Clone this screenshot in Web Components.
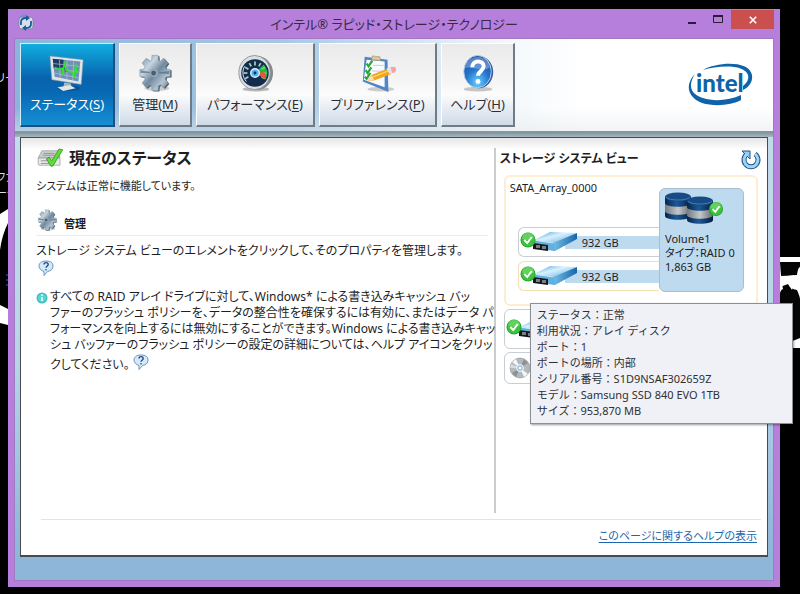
<!DOCTYPE html>
<html lang="ja">
<head>
<meta charset="utf-8">
<title>インテル® ラピッド・ストレージ・テクノロジー</title>
<style>
html{background:#000}
body{margin:0;min-height:100vh;box-sizing:border-box;padding:9px 20px 7px 8px;display:flex;position:relative;overflow:hidden;
font:12px/16px "Noto Sans","Noto Sans CJK JP",sans-serif;font-feature-settings:"palt";color:#1e1e1e}
app-window{flex:1}
</style>
</head>
<body>
<desk-top></desk-top>
<app-window>
  <title-bar slot="title">インテル® ラピッド・ストレージ・テクノロジー</title-bar>
  <tool-bar slot="tools">
    <nav-button icon="monitor" key="S" active>ステータス</nav-button>
    <nav-button icon="gear" key="M">管理</nav-button>
    <nav-button icon="gauge" key="E">パフォーマンス</nav-button>
    <nav-button icon="prefs" key="P">プリファレンス</nav-button>
    <nav-button icon="help" key="H">ヘルプ</nav-button>
  </tool-bar>
  <status-panel></status-panel>
  <storage-view slot="side"></storage-view>
  <a-help slot="foot">このページに関するヘルプの表示</a-help>
</app-window>
<script>
const define=(name,html,init)=>customElements.define(name,class extends HTMLElement{
  constructor(){
    super();
    const t=document.createElement('template');
    t.innerHTML=html;
    this.attachShadow({mode:'open'}).append(t.content.cloneNode(true));
  }
  connectedCallback(){ if(init) init(this,this.shadowRoot); }
});

const gearPath=(()=>{
  const n=8,p=[];
  for(let i=0;i<n;i++){
    const a=i*2*Math.PI/n;
    for(const [d,r] of [[-.3,14],[-.2,19],[.2,19],[.3,14]])
      p.push((20+r*.86*Math.cos(a+d)).toFixed(1)+' '+(20+r*Math.sin(a+d)).toFixed(1));
  }
  return 'M'+p.join('L')+'Z';
})();
const ticks=[...Array(9)].map((_,i)=>`<path d="M20 8v4" stroke="${i>5?'#5fe05a':'#9fd0cc'}" stroke-width="1.8" transform="rotate(${-120+i*30} 20 20)"/>`).join('');
const badge=(x,y,r)=>`<g transform="translate(${x} ${y}) scale(${r/10})"><circle r="10" fill="#1f9c2a"/><circle r="9" fill="#3cc23f"/><path d="M-8-2A8 8 0 0 1 8-2Q0 2-8-2" fill="#79dd70" opacity=".6"/><path d="M-5 0l4 4 6-8" fill="none" stroke="#fff" stroke-width="2.6"/></g>`;
const drum=x=>`<g transform="translate(${x})"><path d="M0 5v19c0 5 26 5 26 0V5z" fill="url(#nv)"/><path d="M0 11v8c0 5 26 5 26 0v-8c0 5-26 5-26 0" fill="url(#sv)"/><ellipse cx="13" cy="5" rx="13" ry="4.5" fill="#164b86"/><path d="M1 5c2 4 22 4 24 0" fill="none" stroke="#5c8fc0" stroke-width=".7"/></g>`;
const icons={
monitor:['0 0 40 40',`<ellipse cx="22" cy="36" rx="12" ry="3" fill="#023a70" opacity=".4"/><path d="M17 30l7 1 1 5h-9z" fill="#aab6bd"/><path d="M10 35l13-2 6 3-13 3z" fill="#e1e6e9"/><path d="M2 2l35 4-2 26L4 27z" fill="#dfe6e9" stroke="#81929c" stroke-width=".6"/><path d="M5 5l29 3-2 21L7 24z" fill="#6f91b5"/><path d="M5 5l11 1 5 13-15-4z" fill="#203969"/><path d="M5 10l28 3M6 15l27 4M6 20l26 5M12 6l1 19M20 7v20M27 8l-1 20" stroke="#b3c6da" stroke-width=".7"/><path d="M7 14l5 2 3-1 1 8 1-15 2 9 6 2 3 5 1-14 1 9 3-1" fill="none" stroke="#2ee52a" stroke-width="1.500"/>`],
gear:['0 0 40 40',`<defs><linearGradient id="g" x1="0" y1="0" x2="1" y2="1"><stop offset="0" stop-color="#73899a"/><stop offset=".3" stop-color="#c6d5df"/><stop offset=".52" stop-color="#7089a0"/><stop offset=".75" stop-color="#b3c5d2"/><stop offset="1" stop-color="#56697a"/></linearGradient></defs><ellipse cx="22" cy="36" rx="13" ry="3" fill="#888" opacity=".4"/><path d="${gearPath}" transform="translate(1.5 1)" fill="#526574"/><path d="${gearPath}" fill="url(#g)" stroke="#7b909f" stroke-width=".5"/><path d="M20 20L5 17v3zM20 20l15-2v3z" fill="#526777" opacity=".65"/><circle cx="19" cy="20" r="4.5" fill="#92a6b6"/><circle cx="18.500" cy="20" r="2.500" fill="#4b5d6b"/>`],
gauge:['0 0 40 40',`<ellipse cx="21" cy="37" rx="14" ry="2.500" fill="#777" opacity=".5"/><ellipse cx="22" cy="20" rx="17" ry="18" fill="#808a90"/><ellipse cx="19.500" cy="19.500" rx="16.500" ry="18" fill="#d9dfe2" stroke="#8d979c"/><circle cx="20" cy="20" r="14.500" fill="#152b4b"/><path d="M20 20l9-9a13 13 0 0 1 3 14z" fill="#27b34c"/>${ticks}<path d="M9 13c-3 5-2 12 2 16" stroke="#e5edf2" fill="none"/><path d="M20 20l12 7-2-8z" fill="#e8553c"/><circle cx="20" cy="20" r="4.500" fill="#4fb4ef" stroke="#d5efff" stroke-width="1.500"/><circle cx="20" cy="20" r="1.500" fill="#0c315b"/>`],
prefs:['0 0 40 40',`<ellipse cx="23" cy="37" rx="14" ry="2.500" fill="#777" opacity=".35"/><path d="M6 3l24 3 1 34-27-11z" fill="#4e86c6"/><path d="M8 6l19 2v27L5 27z" fill="#f8fbfd"/><path d="M14 2l8 1 1 4-10-1z" fill="#dfc7a4" stroke="#988461" stroke-width=".6"/><path d="M15 12h11M14 18h11M13 24h9" stroke="#c4ced8"/><path d="M8 10l2 3 4-6M7 17l2 3 4-6M6 24l2 2 4-6" fill="none" stroke="#2ca634" stroke-width="2.300"/><path d="M9 28l4-6 18-7 3 6-18 7z" fill="#f3a51e"/><path d="M10 27l5-3 18-7" stroke="#ffd467" fill="none" stroke-width="1.500"/><path d="M9 28l4-6 3 5z" fill="#f4dfbb"/><path d="M29 15l4-1 2 6-3 1z" fill="#e3e5e8"/><path d="M33 14q6-2 6 2t-4 4z" fill="#f4a5a1"/>`],
help:['0 0 40 40',`<defs><radialGradient id="h" cx=".5" cy=".85" r=".85"><stop offset="0" stop-color="#67d1ff"/><stop offset=".5" stop-color="#2675cd"/><stop offset="1" stop-color="#164ca5"/></radialGradient></defs><ellipse cx="20" cy="37" rx="15" ry="2.500" fill="#777" opacity=".4"/><ellipse cx="21" cy="19" rx="15" ry="17" fill="#325da1"/><ellipse cx="19.500" cy="18.500" rx="14.500" ry="17" fill="url(#h)" stroke="#b9d3ef"/><path d="M6 15C8-1 32-1 33 14 25 20 12 12 6 15" fill="#fff" opacity=".28"/><path d="M14 14c0-8 12-8 12-1 0 5-6 5-6 10" fill="none" stroke="#fff" stroke-width="4.200"/><circle cx="20" cy="29" r="2.600" fill="#fff"/>`],
app:['0 0 16 16',`<rect x="1" y="2" width="14" height="12" rx="3" fill="#d7e0e8" stroke="#6f7f91" stroke-width=".7"/><path d="M3 10V7q0-4 5-4M13 6v3q0 4-5 4" fill="none" stroke="#1b5d9b" stroke-width="1.800"/><path d="M8 0l4 3-4 3zM8 16l-4-3 4-3z" fill="#1b5d9b"/><path d="M1 3q3-4 7-3" fill="none" stroke="#4f9dd0"/>`],
ok:['0 0 28 22',`<path d="M5 3h18l2 8H1z" fill="#cbcdcf" stroke="#8e9194" stroke-width=".7"/><path d="M1 11h24v8H2q-1 0-1-2z" fill="#e5e6e7" stroke="#8e9194" stroke-width=".7"/><path d="M4 14h11M4 17h9M7 6h12M6 8h13" stroke="#909497"/><path d="M10 12l3-2 3 4 8-13 4 1-11 18h-2z" fill="#62d93c" stroke="#2b9b19" stroke-width=".9"/>`],
ask:['0 0 16 18',`<path d="M8 2C3 2 1 4.500 1 7s2 4.500 5 5.500v4l3.500-4C13 12 15 10 15 7s-2-5-7-5z" fill="#d2eafa" stroke="#6b93c0"/><path d="M6 5.500c0-2.500 4.200-2.500 4.200 0 0 1.700-2.200 1.700-2.200 3.300" fill="none" stroke="#21457f" stroke-width="1.300"/><circle cx="8" cy="10.700" r=".8" fill="#21457f"/>`],
info:['0 0 12 12',`<circle cx="6" cy="6" r="5.500" fill="#38bfc0"/><circle cx="6" cy="6" r="4.200" fill="#5bd3cf"/><path d="M6 5v4" stroke="#fff" stroke-width="1.600"/><circle cx="6" cy="3.200" r=".9" fill="#fff"/>`],
refresh:['0 0 20 20',`<path d="M6 5a7 7 0 1 0 8 0" fill="none" stroke="#255580" stroke-width="5"/><path d="M1 2h8v8z" fill="#8ed0f5" stroke="#255580" stroke-linejoin="round"/><path d="M6 5a7 7 0 1 0 8 0" fill="none" stroke="#9bd6f7" stroke-width="3"/>`],
drive:['0 0 56 20',`<defs><linearGradient id="d" x1="0" y1="0" x2="1" y2="1"><stop offset="0" stop-color="#3f9ad6"/><stop offset=".4" stop-color="#d9f1ff"/><stop offset="1" stop-color="#4ba0d8"/></linearGradient><linearGradient id="e"><stop offset="0" stop-color="#7cc6ee"/><stop offset="1" stop-color="#1766a8"/></linearGradient></defs><path d="M13 8L29 0l27 1-23 11z" fill="url(#d)"/><path d="M32 11L56 1v6L34 19l-4-1z" fill="url(#e)"/><path d="M12 8l21 3 1 8-22-3z" fill="#63b0de"/><path d="M12 11l15 2v6l-15-2z" fill="#15191d"/><path d="M16 13v3M18 13v3M22 14v3M24 14v3" stroke="#dce5ea"/><path d="M12 8l20 3" stroke="#c7e9f8"/>${badge(7,8,7.5)}`],
volume:['0 0 60 34',`<defs><linearGradient id="nv"><stop offset="0" stop-color="#082549"/><stop offset=".45" stop-color="#1c5a9b"/><stop offset="1" stop-color="#061d3d"/></linearGradient><linearGradient id="sv"><stop offset="0" stop-color="#747a7f"/><stop offset=".5" stop-color="#c5c8c9"/><stop offset="1" stop-color="#63696d"/></linearGradient></defs>${drum(0)}<g transform="translate(0 4)">${drum(22)}</g>${badge(51,17,7)}`],
disc:['0 0 22 22',`<circle cx="11" cy="11" r="10" fill="#b4b8bb" stroke="#8c9296" stroke-width=".6"/><path d="M11 11L3 5l4-3zM11 11l8 6-4 3z" fill="#f3f5f6"/><path d="M11 11l4-9 4 4zM11 11l-4 9-4-4z" fill="#8b9196"/><path d="M11 11H1l1-4z" fill="#d6dadd"/><circle cx="11" cy="11" r="3.500" fill="#a2c7dc" stroke="#f3f7f9"/><circle cx="11" cy="11" r="1.300" fill="#fff"/>`],
intel:['0 0 68 48',`<path d="M16 9C30 1 62-1 65 14c1 7-3 12-9 15v-4c4-3 6-7 5-11C58 3 31 4 16 9z" fill="#0f64a9"/><path d="M8 13C-2 23 0 36 15 42c13 4 30 2 39-3v-5C43 39 28 41 16 37 3 33 1 24 8 13z" fill="#0f64a9"/><text x="9" y="31" font-family="Lato,sans-serif" font-weight="900" font-size="24" fill="#0f64a9">intel</text>`]
};
define('ui-icon','<style>:host{display:inline-block;flex:none}span,svg{display:block;width:100%;height:100%;overflow:visible}</style><span></span>',(h,r)=>{
  const [vb,body]=icons[h.getAttribute('name')];
  r.querySelector('span').innerHTML=`<svg viewBox="${vb}" aria-hidden="true">${body}</svg>`;
});

define('desk-top',`<style>:host{position:absolute;inset:0;overflow:hidden;color:#ddd}
svg{position:absolute;top:0;height:594px}.l{left:0;width:8px}.r{right:0;width:21px}
span{position:absolute;left:-4px;white-space:nowrap;line-height:12px;font-size:11px}.a{top:72px}.b{top:171px}.c{top:187px}</style>
<svg class="l" viewBox="0 0 8 594"><path d="M0 214l8-5v14q-6 12-8 27zM0 305l8 4v16l-8-2z" fill="#fff"/><path d="M6 275h2M6 280h2M6 285h2" stroke="#3b61c5"/></svg>
<svg class="r" viewBox="0 0 21 594"><path d="M0 257h21v91H0z" fill="#fff"/><path d="M1 262h20v5q-2 0-3 8-7-1-9 8 2 6 9 7 3 7 3 9H1q-1-9 3-10-2-9-3-27z" fill="#050505"/><path d="M1 276q7 0 14-1 1 8-2 15l-4-6-8 3z" fill="#fff"/><path d="M0 299h21v39Q10 343 0 344z" fill="#050505"/></svg>
<span class="a">リー</span><span class="b">ファ</span><span class="c">ータ</span>`);

define('app-window',`<style>
:host{display:flex;flex-direction:column;position:relative;background:#b67fdb;padding:0 6px 6px}
.client{flex:1;display:flex;flex-direction:column;border:1px solid #a078c4;background:linear-gradient(#c6dfec,#b6d3e8 60%,#8eb6d8 95%)}
.under{height:5px;background:linear-gradient(#7f9099,#a5b9c1)}
.panel{flex:1;margin:0 5px 23px;border:1px solid #464c51;border-bottom-width:2px;background:linear-gradient(#e6e6e6,#fff 12px);
display:grid;grid-template-columns:minmax(0,7fr) minmax(0,4fr);grid-template-rows:1fr auto;box-sizing:border-box}
.main{margin:10px 0 6px;border-right:2px solid #ccc;padding:0 6px 0 15px}
.side{padding:11px 6px 0 4px}
footer{grid-column:1/-1;margin:0 6px 0 20px;border-top:1px solid #e3e3e3;padding:8px 4px 11px;text-align:right}
</style><slot name="title"></slot><div class="client"><slot name="tools"></slot><div class="under"></div>
<div class="panel"><main class="main"><slot></slot></main><aside class="side"><slot name="side"></slot></aside><footer><slot name="foot"></slot></footer></div></div>`);

define('title-bar',`<style>
:host{display:grid;grid-template-columns:100px 1fr 100px;height:29px;color:#3a2848}
.app{width:16px;height:16px;margin:6px 0 0 4px}
h1{margin:0;font:inherit;font-size:13px;line-height:30px;text-align:center;white-space:nowrap}
.ctl{display:flex;justify-content:flex-end;align-items:flex-start}
button{flex:none;border:0;background:none;padding:0;width:26px;height:20px;display:grid;place-items:center;color:#2b1b38}
.close{width:43px;background:#c9504f;color:#fff;height:19px;margin-top:1px}
svg{width:10px;height:10px}.close svg{width:8px;height:8px}
</style><ui-icon class="app" name="app"></ui-icon><h1><slot></slot></h1>
<div class="ctl"><button aria-label="最小化"><svg viewBox="0 0 10 10"><path d="M1 9h8" stroke="currentColor" stroke-width="2"/></svg></button>
<button aria-label="最大化"><svg viewBox="0 0 10 10"><path d="M.5 1.500h9v7h-9z" fill="none" stroke="currentColor"/><path d="M0 2h10" stroke="currentColor" stroke-width="2"/></svg></button>
<button class="close" aria-label="閉じる"><svg viewBox="0 0 10 10"><path d="M1 1l8 8M9 1L1 9" stroke="currentColor" stroke-width="2"/></svg></button></div>`);

define('tool-bar',`<style>
:host{display:flex;justify-content:space-between;align-items:center;padding:4px 18px 4px 5px;border-bottom:1px solid #8597a2;
background:linear-gradient(#fff0 75%,#e4e8ea80),linear-gradient(90deg,#8cb4da,#a5c7e5 35%,#f4f8fc 65%,#fff 75%)}
nav{display:grid;grid-template-columns:95px 73px 119px 118px 74px;gap:4px}
ui-icon{width:68px;height:48px}
</style><nav><slot></slot></nav><ui-icon name="intel"></ui-icon>`);

define('nav-button',`<style>
:host{display:block}
button{width:100%;height:84px;display:flex;flex-direction:column;align-items:center;padding:10px 0 0;gap:2px;
font:inherit;font-feature-settings:inherit;font-size:13px;line-height:20px;color:#2c3036;white-space:nowrap;
background:linear-gradient(#eaeaea,#f6f6f6 50%,#fcfcfc 62%,#cfdae7);border:1px solid #fff;border-right:2px solid #6f7b85;border-bottom:2px solid #6f7b85}
:host([active]) button{color:#fff;background:linear-gradient(#10aee0,#0863ae 42%,#0868b4 60%,#168fd3);border-color:#d4ecfa #1c4f7c #1c4f7c #d4ecfa}
ui-icon{width:38px;height:38px}u{text-underline-offset:2px}
</style><button><span><slot></slot>(<u></u>)</span></button>`,(h,r)=>{
  const i=document.createElement('ui-icon');
  i.setAttribute('name',h.getAttribute('icon'));
  r.querySelector('button').prepend(i);
  r.querySelector('u').textContent=h.getAttribute('key');
});

define('status-panel',`<style>
:host{display:block;white-space:nowrap}
h2,h3,p{margin:0}
h2{display:flex;align-items:center;gap:5px;font-size:16px;line-height:20px}
h2 ui-icon{width:28px;height:20px}
h2+p{margin-top:10px;font-size:11px}
h3{display:flex;align-items:flex-end;gap:6px;margin-top:14px;padding-bottom:3px;border-bottom:1px solid #ebebeb;font-size:11px}
h3 ui-icon{width:22px;height:24px}
h3+p{margin-top:7px}
button{border:0;background:none;padding:0;vertical-align:-2px}
button ui-icon{width:16px;height:18px;display:block}
.ask{margin-left:2px;display:block}
.tip{display:grid;grid-template-columns:12px 1fr;gap:2px;margin-top:12px}
.tip>ui-icon{width:12px;height:12px;margin-top:3px}
</style><h2><ui-icon name="ok"></ui-icon>現在のステータス</h2><p>システムは正常に機能しています。</p>
<h3><ui-icon name="gear"></ui-icon>管理</h3><p>ストレージ システム ビューのエレメントをクリックして、そのプロパティを管理します。</p>
<button class="ask" aria-label="ヘルプ"><ui-icon name="ask"></ui-icon></button>
<div class="tip"><ui-icon name="info"></ui-icon><p>すべての RAID アレイ ドライブに対して、Windows* による書き込みキャッシュ バッ<br>ファーのフラッシュ ポリシーを、データの整合性を確保するには有効に、またはデータ パ<br>フォーマンスを向上するには無効にすることができます。Windows による書き込みキャッ<br>シュ バッファーのフラッシュ ポリシーの設定の詳細については、ヘルプ アイコンをクリッ<br>クしてください。 <button aria-label="ヘルプ"><ui-icon name="ask"></ui-icon></button></p></div>`);

define('disk-row',`<style>
:host{display:flex;align-items:center;height:30px;box-sizing:border-box;border:1px solid #c8ced3;border-right:0;border-radius:6px 0 0 6px;background:#fff;padding-left:2px}
:host([hot]){border-color:#f6dfae}
ui-icon{width:56px;height:20px;z-index:1}
span{flex:1;height:13px;line-height:13px;font-size:11px;background:#bedaef;margin-left:-12px;padding-left:17px}
</style><ui-icon name="drive"></ui-icon><span><slot></slot></span>`);

define('tip-box',`<style>
:host{display:block;box-sizing:border-box;border:1px solid #8c8f94;background:#f0f0f7;padding:3px 6px 4px;white-space:nowrap;color:#2f3033;box-shadow:1px 1px 2px #0006;font-size:11px;font-feature-settings:normal}
</style><slot></slot>`);

define('storage-view',`<style>
:host{display:block;white-space:nowrap}
header{display:flex;justify-content:space-between;align-items:center}
h2{margin:0;font-size:12px;line-height:20px}
header button{border:0;background:none;padding:0}header ui-icon{width:20px;height:20px;display:block}
.array{margin:6px 3px 0 4px;border:2px solid #fdeed3;border-radius:6px;padding:11px 12px 12px 12px;display:grid;grid-template-columns:1fr 85px;height:131px;box-sizing:border-box}
.drives{display:flex;flex-direction:column;gap:4px;justify-content:flex-end;padding-bottom:1px}
h3{margin:-8px 0 auto -8px;font:inherit;font-size:11px;line-height:16px}
.vol{border:1px solid #a9bfd0;border-radius:6px;background:#bedaef;padding:3px 5px;font-size:11px;line-height:14px}
.vol ui-icon{width:60px;height:34px;display:block;margin-bottom:6px}
.stack{position:relative}
.box{margin:3px 3px 0 4px;border:1px solid #c8ced3;border-radius:6px;height:38px;display:flex;align-items:center;padding-left:2px}
.box ui-icon{width:56px;height:20px}.box.s{height:30px;padding-left:4px}.box.s ui-icon{width:22px;height:22px}
tip-box{position:absolute;left:30px;top:-6px;width:263px;z-index:2}
</style><header><h2>ストレージ システム ビュー</h2><button aria-label="更新"><ui-icon name="refresh"></ui-icon></button></header>
<div class="array"><div class="drives"><h3>SATA_Array_0000</h3><disk-row>932 GB</disk-row><disk-row hot>932 GB</disk-row></div>
<div class="vol"><ui-icon name="volume"></ui-icon>Volume1<br>タイプ：RAID 0<br>1,863 GB</div></div>
<div class="stack"><div class="box"><ui-icon name="drive"></ui-icon></div><div class="box s"><ui-icon name="disc"></ui-icon></div>
<tip-box>ステータス：正常<br>利用状況：アレイ ディスク<br>ポート：1<br>ポートの場所：内部<br>シリアル番号：S1D9NSAF302659Z<br>モデル：Samsung SSD 840 EVO 1TB<br>サイズ：953,870 MB</tip-box></div>`);

define('a-help','<style>a{font-size:11px;color:#1c66b0;text-underline-offset:2px}</style><a href="#help"><slot></slot></a>');
</script>
</body>
</html>
